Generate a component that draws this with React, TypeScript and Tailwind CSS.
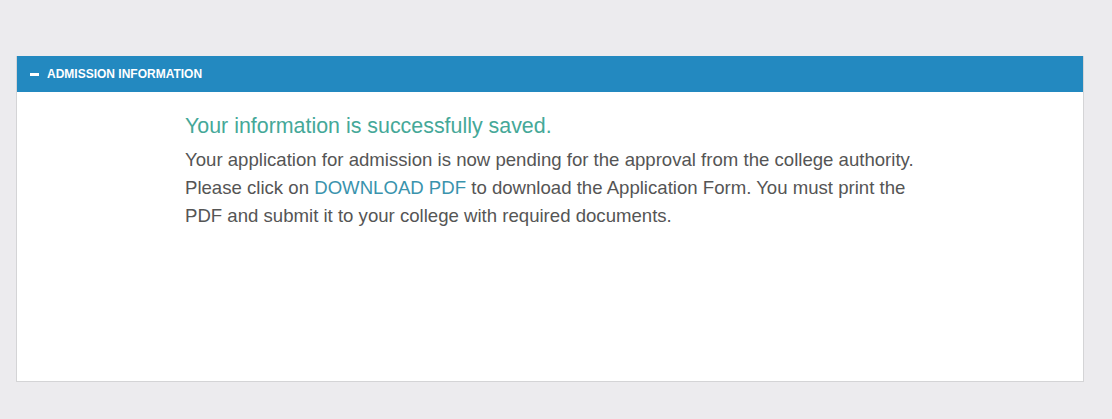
import React from "react";

const App = () => {
  return (
    <div className="min-h-[419px] w-full bg-[#ecebee] pt-[56px] px-[16px] pb-[37px] font-['Liberation_Sans',Arial,sans-serif]">
      <div className="w-[1068px] border border-[#d4d4d6] border-t-0 bg-white">
        <div className="flex h-[36px] items-center gap-[8px] bg-[#2389c0] pl-[13px] text-white">
          <span className="block h-[3px] w-[9px] bg-white" />
          <span className="text-[12px] font-bold">ADMISSION INFORMATION</span>
        </div>
        <div className="h-[289px] pl-[168px] pt-[21px]">
          <h2 className="text-[21.4px] leading-[26px] text-[#45a898]">
            Your information is successfully saved.
          </h2>
          <p className="mt-[7px] w-[740px] text-[18.6px] leading-[28px] text-[#555555]">
            Your application for admission is now pending for the approval from the college
            authority. Please click on{" "}
            <a className="text-[#3a93ad]">DOWNLOAD PDF</a> to download the Application Form. You
            must print the PDF and submit it to your college with required documents.
          </p>
        </div>
      </div>
    </div>
  );
};

export default App;
